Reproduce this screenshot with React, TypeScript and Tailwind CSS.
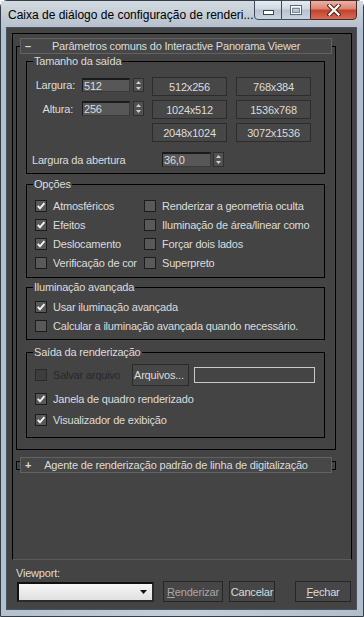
import React from "react";

const font = "font-['Liberation_Sans',Arial,sans-serif]";

function Check({ checked = false, disabled = false }: { checked?: boolean; disabled?: boolean }) {
  return (
    <span
      className={`flex h-[12px] w-[12px] shrink-0 items-center justify-center border ${
        disabled ? "border-[#2a2a2a] bg-[#3d3d3d]" : "border-[#1c1c1c] bg-[#595959]"
      }`}
    >
      {checked && (
        <svg width="10" height="10" viewBox="0 0 10 10">
          <path d="M1.8 4.8 L4 7.3 L8.4 2.2" fill="none" stroke="#f4f4f4" strokeWidth="1.9" />
        </svg>
      )}
    </span>
  );
}

function CheckRow({
  label,
  checked,
  disabled,
  h = "h-[19px]",
}: {
  label: string;
  checked?: boolean;
  disabled?: boolean;
  h?: string;
}) {
  return (
    <div className={`flex ${h} items-center`}>
      <Check checked={checked} disabled={disabled} />
      <span className={`ml-[6px] whitespace-nowrap ${disabled ? "text-[#282828]" : ""}`}>{label}</span>
    </div>
  );
}

function Spinner() {
  return (
    <div className="flex h-full w-[11px] flex-col items-center justify-center gap-[3px] border border-[#2e2e2e] bg-[#515151]">
      <svg width="5" height="3" viewBox="0 0 5 3">
        <path d="M0 3 L2.5 0 L5 3Z" fill="#d0d0d0" />
      </svg>
      <svg width="5" height="3" viewBox="0 0 5 3">
        <path d="M0 0 L5 0 L2.5 3Z" fill="#d0d0d0" />
      </svg>
    </div>
  );
}

function Field({ value, w }: { value: string; w: string }) {
  return (
    <div className={`flex h-full ${w} items-center border border-t-2 border-[#1a1a1a] border-b-[#3a3a3a] border-r-[#3a3a3a] bg-[#575757] pl-[1px]`}>
      {value}
    </div>
  );
}

function Group({ title, className, children }: { title: string; className?: string; children: React.ReactNode }) {
  return (
    <div className={`relative ml-[10px] w-[299px] border border-black ${className ?? ""}`}>
      <span className="absolute left-[6px] top-[-8px] bg-[#444444] px-[1px] leading-[14px]">{title}</span>
      {children}
    </div>
  );
}

function Preset({ label }: { label: string }) {
  return (
    <div className="flex h-[19px] items-center justify-center border border-[#2c2c2c] bg-[#474747]">{label}</div>
  );
}

function Header({ sign, label }: { sign: string; label: string }) {
  return (
    <div className="relative mx-[4px] flex h-[16px] items-center border border-[#626262] bg-[#474747]">
      <span className="w-[14px] pl-[4px] font-bold">{sign}</span>
      <span className="flex-1 text-center whitespace-nowrap">{label}</span>
      <span className="w-[14px]" />
    </div>
  );
}

export default function App() {
  return (
    <div className={`${font} h-[617px] w-[364px] overflow-hidden text-[11px] leading-[14px] tracking-[-0.2px] text-[#dcdcdc]`}>
      <div className="flex h-full w-full flex-col rounded-t-[7px] border border-[#323d49] bg-[linear-gradient(to_right,#b3c0cd,#c3ced9_50%,#b0bdca)]">
        {/* title bar */}
        <div className="flex h-[27px] shrink-0 items-start justify-between bg-[linear-gradient(to_bottom,#d3dae1,#c1cad3_60%,#b6c1cc)]">
          <span className="mt-[6px] pl-[7px] text-[12px] leading-[16px] tracking-normal text-black whitespace-nowrap">
            Caixa de diálogo de configuração de renderi...
          </span>
          <div className="mr-[6px] -mt-[1px] flex h-[20px]">
            <div className="flex w-[28px] items-end justify-center rounded-bl-[4px] border border-[#3e4b59] bg-[linear-gradient(to_bottom,#e6ebf0,#cfd8e1_45%,#b5c2cf_50%,#c9d4de)] pb-[4px]">
              <svg width="11" height="5" viewBox="0 0 11 5">
                <rect x="0.5" y="0.5" width="10" height="4" fill="#ffffff" stroke="#3a4553" />
              </svg>
            </div>
            <div className="flex w-[28px] items-center justify-center border-y border-[#3e4b59] bg-[linear-gradient(to_bottom,#e6ebf0,#cfd8e1_45%,#b5c2cf_50%,#c9d4de)]">
              <svg width="12" height="10" viewBox="0 0 12 10">
                <rect x="0.5" y="0.5" width="11" height="9" fill="none" stroke="#5a6878" />
                <rect x="1.5" y="1.5" width="9" height="7" fill="none" stroke="#ffffff" />
                <rect x="2.5" y="3.5" width="7" height="4" fill="none" stroke="#7d8a98" />
              </svg>
            </div>
            <div className="flex w-[47px] items-center justify-center rounded-br-[4px] border border-[#4a2a28] bg-[linear-gradient(to_bottom,#eab3a6,#d9826f_45%,#c43f2a_50%,#d36e58)]">
              <svg width="14" height="12" viewBox="0 0 14 12">
                <path d="M2.5 1.5 L11.5 10.5 M11.5 1.5 L2.5 10.5" stroke="#4a2320" strokeWidth="4.2" strokeLinecap="square" />
                <path d="M2.5 1.5 L11.5 10.5 M11.5 1.5 L2.5 10.5" stroke="#ffffff" strokeWidth="2.2" strokeLinecap="square" />
              </svg>
            </div>
          </div>
        </div>

        {/* body with frame */}
        <div className="flex flex-1 pb-[7px] pl-[6px] pr-[7px]">
          <div className="flex flex-1 flex-col bg-[#444444] shadow-[0_0_0_1px_#46525f]">
            {/* scroll panel */}
            <div className="ml-[5px] mt-[5px] h-[527px] w-[340px] border border-black border-b-[#5a5a5a]">
              {/* rollout 1 */}
              <div className="relative ml-[3px] mt-[4px] w-[320px] pb-[12px]">
                <div className="absolute bottom-0 left-0 right-0 top-[8px] border border-black" />
                <Header sign="–" label="Parâmetros comuns do Interactive Panorama Viewer" />

                {/* Tamanho da saída */}
                <Group title="Tamanho da saída" className="mt-[7px] pb-[6px] pt-[15px]">
                  <div className="flex">
                    <div className="flex w-[125px] flex-col">
                      <div className="mt-[1px] flex h-[14px] items-center">
                        <span className="w-[48px] text-right">Largura:</span>
                        <div className="ml-[7px] flex h-full">
                          <Field value="512" w="w-[48px]" />
                          <div className="ml-[3px] h-full">
                            <Spinner />
                          </div>
                        </div>
                      </div>
                      <div className="mt-[9px] flex h-[15px] items-center">
                        <span className="w-[46px] text-right">Altura:</span>
                        <div className="ml-[9px] flex h-full">
                          <Field value="256" w="w-[48px]" />
                          <div className="ml-[3px] h-full">
                            <Spinner />
                          </div>
                        </div>
                      </div>
                    </div>
                    <div className="grid grid-cols-[75px_75px] gap-x-[9px] gap-y-[4px]">
                      <Preset label="512x256" />
                      <Preset label="768x384" />
                      <Preset label="1024x512" />
                      <Preset label="1536x768" />
                      <Preset label="2048x1024" />
                      <Preset label="3072x1536" />
                    </div>
                  </div>
                  <div className="mt-[10px] flex h-[15px] items-center">
                    <span className="w-[135px] pl-[5px]">Largura da abertura</span>
                    <Field value="36,0" w="w-[49px]" />
                    <div className="ml-[2px] h-full">
                      <Spinner />
                    </div>
                  </div>
                </Group>

                {/* Opções */}
                <Group title="Opções" className="mt-[10px] pb-[5px] pl-[8px] pt-[11px]">
                  <div className="grid grid-cols-[109px_1fr]">
                    <CheckRow label="Atmosféricos" checked />
                    <CheckRow label="Renderizar a geometria oculta" />
                    <CheckRow label="Efeitos" checked />
                    <CheckRow label="Iluminação de área/linear como" />
                    <CheckRow label="Deslocamento" checked />
                    <CheckRow label="Forçar dois lados" />
                    <CheckRow label="Verificação de cor" />
                    <CheckRow label="Superpreto" />
                  </div>
                </Group>

                {/* Iluminação avançada */}
                <Group title="Iluminação avançada" className="mt-[9px] pb-[4px] pl-[8px] pt-[9px]">
                  <CheckRow label="Usar iluminação avançada" checked />
                  <CheckRow label="Calcular a iluminação avançada quando necessário." />
                </Group>

                {/* Saída da renderização */}
                <Group title="Saída da renderização" className="mt-[12px] pb-[7px] pl-[8px] pt-[11px]">
                  <div className="flex h-[22px] items-center">
                    <Check disabled />
                    <span className="ml-[6px] w-[79px] whitespace-nowrap text-[#282828]">Salvar arquivo</span>
                    <div className="flex h-full w-[57px] items-center border border-[#2a2a2a] bg-[#474747] pl-[1px]">
                      Arquivos...
                    </div>
                    <div className="ml-[5px] h-[16px] w-[121px] border border-[#c9c9c9] bg-[#444444]" />
                  </div>
                  <div className="mt-[2px]">
                    <CheckRow label="Janela de quadro renderizado" checked h="h-[21px]" />
                    <CheckRow label="Visualizador de exibição" checked h="h-[21px]" />
                  </div>
                </Group>
              </div>

              {/* rollout 2 */}
              <div className="relative ml-[3px] mt-[7px] w-[320px]">
                <div className="absolute left-0 right-0 top-[4px] h-[9px] border border-black" />
                <Header sign="+" label="Agente de renderização padrão de linha de digitalização" />
              </div>
            </div>

            {/* bottom area */}
            <div className="mt-[6px] pl-[9px] leading-[14px]">Viewport:</div>
            <div className="mt-[1px] flex h-[21px] items-center pl-[10px]">
              <div className="flex h-[20px] w-[137px] items-center justify-end border-2 border-[#111111] border-b-[#2a2a2a] border-r-[#2a2a2a] bg-[linear-gradient(to_bottom,#f6f6f6,#e0e0e0)] pr-[5px]">
                <svg width="7" height="4" viewBox="0 0 7 4">
                  <path d="M0 0H7L3.5 4Z" fill="#111111" />
                </svg>
              </div>
              <div className="ml-[9px] flex h-full w-[60px] items-center justify-center border border-[#262626] bg-[#464646] text-[#a8a8a8]">
                <span className="underline">R</span>enderizar
              </div>
              <div className="ml-[6px] flex h-full w-[46px] items-center justify-center border border-[#262626] bg-[#464646]">
                Cancelar
              </div>
              <div className="ml-[20px] flex h-full w-[56px] items-center justify-center border border-[#262626] bg-[#464646]">
                <span className="underline">F</span>echar
              </div>
            </div>
          </div>
        </div>
      </div>
    </div>
  );
}
